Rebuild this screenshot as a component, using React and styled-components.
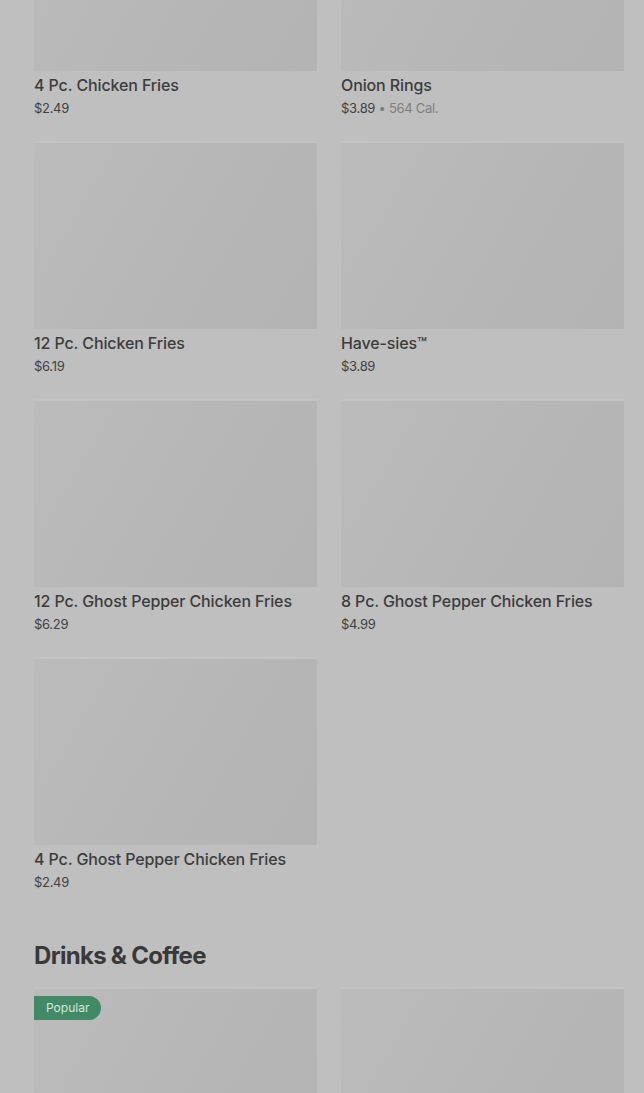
import React from 'react';
import styled, { createGlobalStyle } from 'styled-components';

const GlobalStyle = createGlobalStyle`
  html, body {
    margin: 0;
    padding: 0;
    background: #bfbfbf;
    overflow: hidden;
  }
  body {
    font-family: Inter, "Noto Sans", sans-serif;
    color: #3b3b3b;
  }
`;

const Page = styled.div`
  width: 644px;
  height: 1093px;
  overflow: hidden;
  background: #bfbfbf;
`;

const Content = styled.div`
  margin-top: -117px;
  padding: 0 20px 0 34px;
`;

const Section = styled.section`
  margin-bottom: 49px;
`;

const SectionTitle = styled.h2`
  margin: 0 0 15px;
  font-family: Inter, "Noto Sans", sans-serif;
  font-size: 24px;
  font-weight: 700;
  letter-spacing: -0.7px;
  line-height: 32px;
  color: #393939;
`;

const Grid = styled.div`
  display: grid;
  grid-template-columns: repeat(2, 283px);
  column-gap: 24px;
  row-gap: 24px;
`;

const Item = styled.div`
  display: flex;
  flex-direction: column;
`;

const Thumb = styled.div`
  position: relative;
  height: 188px;
  background: linear-gradient(120deg, #bbbbbb 0%, #b7b7b7 50%, #b3b3b3 100%);
  border-top: 2px solid #c3c3c3;
  box-sizing: border-box;
`;

const Badge = styled.span`
  position: absolute;
  top: 7px;
  left: 0;
  padding: 0 12px;
  height: 24px;
  line-height: 24px;
  border-radius: 0 12px 12px 0;
  background: #428a66;
  color: #d9e6df;
  font-size: 12px;
  font-weight: 400;
`;

const Name = styled.div`
  margin-top: 4px;
  font-size: 16px;
  font-weight: 500;
  letter-spacing: -0.12px;
  line-height: 20px;
  color: #3c3c3c;
`;

const Meta = styled.div`
  margin-top: 4px;
  font-size: 13px;
  letter-spacing: -0.3px;
  line-height: 18px;
  color: #424242;
`;

const Cal = styled.span`
  color: #7e7e7e;
`;

const sides = [
  { name: '4 Pc. Chicken Fries', price: '$2.49' },
  { name: 'Onion Rings', price: '$3.89', cal: '564 Cal.' },
  { name: '12 Pc. Chicken Fries', price: '$6.19' },
  { name: 'Have-sies™', price: '$3.89' },
  { name: '12 Pc. Ghost Pepper Chicken Fries', price: '$6.29' },
  { name: '8 Pc. Ghost Pepper Chicken Fries', price: '$4.99' },
  { name: '4 Pc. Ghost Pepper Chicken Fries', price: '$2.49' },
];

const drinks = [{ popular: true }, {}];

function MenuItem({ name, price, cal, popular }) {
  return (
    <Item>
      <Thumb>{popular && <Badge>Popular</Badge>}</Thumb>
      {name && <Name>{name}</Name>}
      {price && (
        <Meta>
          {price}
          {cal && <Cal> • {cal}</Cal>}
        </Meta>
      )}
    </Item>
  );
}

export default function App() {
  return (
    <Page>
      <GlobalStyle />
      <Content>
        <Section>
          <Grid>
            {sides.map((item) => (
              <MenuItem key={item.name} {...item} />
            ))}
          </Grid>
        </Section>
        <Section>
          <SectionTitle>Drinks &amp; Coffee</SectionTitle>
          <Grid>
            {drinks.map((item, i) => (
              <MenuItem key={i} {...item} />
            ))}
          </Grid>
        </Section>
      </Content>
    </Page>
  );
}
